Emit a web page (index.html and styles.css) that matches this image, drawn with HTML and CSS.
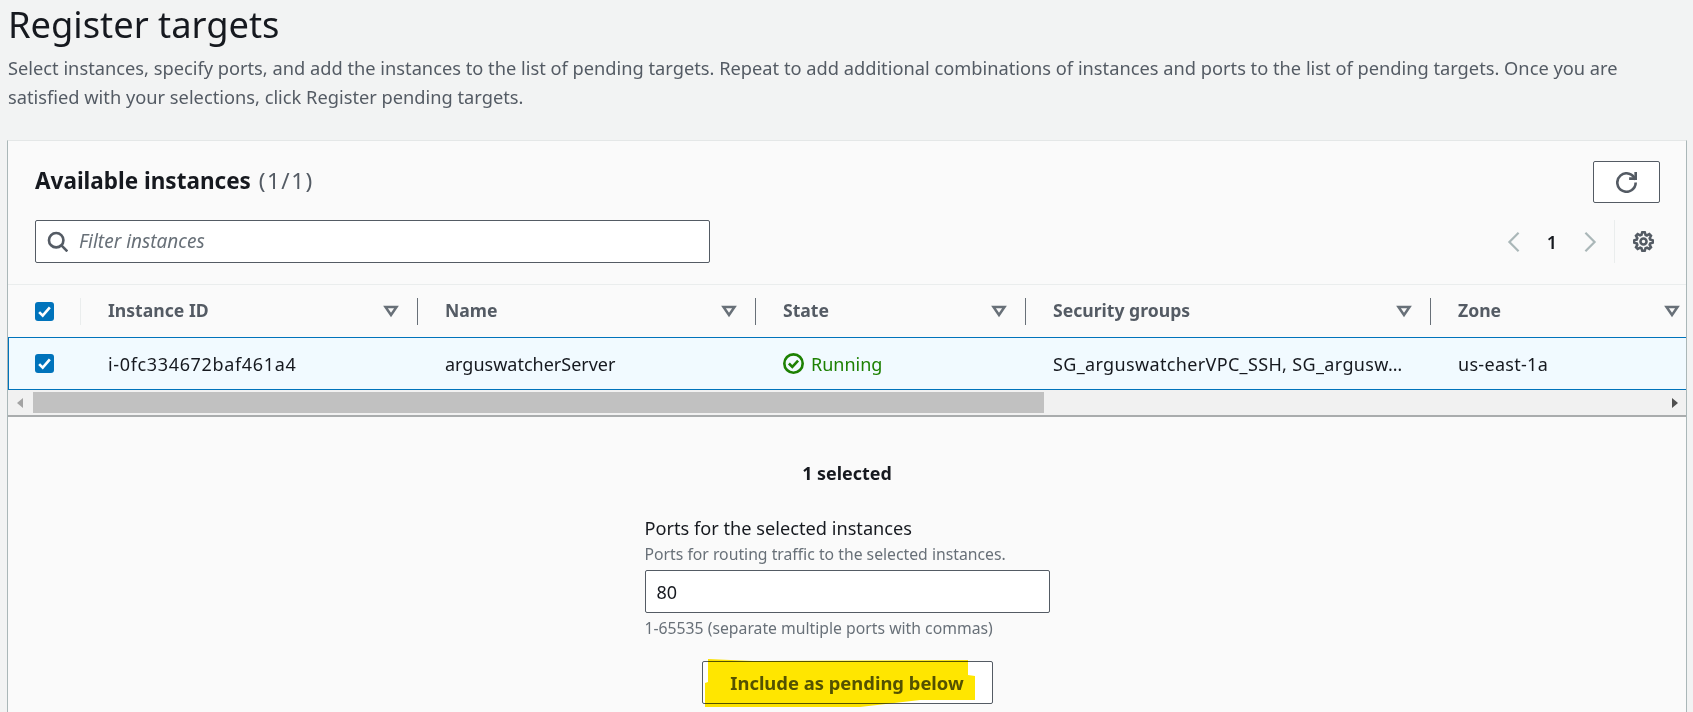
FILE: index.html
```html
<!DOCTYPE html>
<html lang="en">
<head>
<meta charset="UTF-8">
<title>Register targets</title>
<link rel="stylesheet" href="styles.css">
</head>
<body>
<div class="page-head">
    <h1>Register targets</h1>
    <p>Select instances, specify ports, and add the instances to the list of pending targets. Repeat to add additional combinations of instances and ports to the list of pending targets. Once you are satisfied with your selections, click Register pending targets.</p>
</div>

<div class="panel">
    <div class="panel-top">
        <div class="title-row">
            <h2>Available instances <span class="count">(1/1)</span></h2>
            <button class="refresh-btn" aria-label="Refresh">
                <svg class="icon" viewBox="0 0 16 16"><path d="M10 5h5V0"/><path d="M15 8a7 7 0 1 1-.3-2"/></svg>
            </button>
        </div>
        <div class="filter-row">
            <div class="filter-box">
                <svg class="icon search-icon" viewBox="0 0 16 16"><circle cx="7" cy="7" r="5.5"/><path d="M11 11l4.5 4.5"/></svg>
                <span class="placeholder">Filter instances</span>
            </div>
            <div class="pager">
                <svg class="chevron" viewBox="0 0 16 24"><path d="M13 2L3 12l10 10"/></svg>
                <span class="page-num">1</span>
                <svg class="chevron" viewBox="0 0 16 24"><path d="M3 2l10 10L3 22"/></svg>
                <div class="pager-sep"></div>
                <svg class="icon gear" viewBox="-1 -1 18 18"><path d="M13.3 5.2l1.1-2.1L13 1.7l-2.1 1.1c-.3-.2-.7-.3-1.1-.4L9 0H7l-.8 2.3c-.4.1-.7.2-1.1.4L3 1.6 1.6 3l1.1 2.1c-.2.3-.3.7-.4 1.1L0 7v2l2.3.8c.1.4.3.7.4 1.1L1.6 13 3 14.4l2.1-1.1c.3.2.7.3 1.1.4L7 16h2l.8-2.3c.4-.1.7-.3 1.1-.4l2.1 1.1 1.4-1.4-1.1-2.1c.2-.3.3-.7.4-1.1L16 9V7l-2.3-.8c-.1-.4-.3-.7-.4-1z"/><circle cx="8" cy="8" r="2.6"/></svg>
            </div>
        </div>
    </div>

    <div class="grid-row head-row">
        <div class="cell check-cell">
            <span class="checkbox"><svg viewBox="0 0 16 16"><path d="M3.5 8.5l3 3 6-7"/></svg></span>
        </div>
        <div class="cell">Instance ID
            <svg class="filter-icon" viewBox="0 0 16 16"><path d="M2.5 4h11L8 12z"/></svg>
        </div>
        <div class="cell">Name
            <svg class="filter-icon" viewBox="0 0 16 16"><path d="M2.5 4h11L8 12z"/></svg>
        </div>
        <div class="cell">State
            <svg class="filter-icon" viewBox="0 0 16 16"><path d="M2.5 4h11L8 12z"/></svg>
        </div>
        <div class="cell">Security groups
            <svg class="filter-icon" viewBox="0 0 16 16"><path d="M2.5 4h11L8 12z"/></svg>
        </div>
        <div class="cell">Zone
            <svg class="filter-icon" viewBox="0 0 16 16"><path d="M2.5 4h11L8 12z"/></svg>
        </div>
    </div>
    <div class="grid-row body-row">
        <div class="cell check-cell">
            <span class="checkbox"><svg viewBox="0 0 16 16"><path d="M3.5 8.5l3 3 6-7"/></svg></span>
        </div>
        <div class="cell instance-id">i-0fc334672baf461a4</div>
        <div class="cell">arguswatcherServer</div>
        <div class="cell state-running">
            <svg class="status-icon" viewBox="0 0 16 16"><circle cx="8" cy="8" r="7"/><path d="M4.5 8l2.6 2.6 4.4-4.8"/></svg>
            Running
        </div>
        <div class="cell groups">SG_arguswatcherVPC_SSH, SG_argusw…</div>
        <div class="cell zone">us-east-1a</div>
    </div>

    <div class="scrollbar">
        <span class="arrow-left"></span>
        <div class="thumb"></div>
        <span class="arrow-right"></span>
    </div>

    <div class="selection">
        <div class="selected-count">1 selected</div>
        <div class="field">
            <label>Ports for the selected instances</label>
            <div class="field-desc">Ports for routing traffic to the selected instances.</div>
            <div class="text-input">80</div>
            <div class="field-hint">1-65535 (separate multiple ports with commas)</div>
        </div>
        <div class="include-wrap">
            <button class="include-btn">Include as pending below</button>
            <svg class="marker" viewBox="0 0 291 48"><path d="M6 -2 L51 0 L266 -1 L266 14 L273 15 L273 39 L218 39 L158 46 L3 46 L3 22 L6 21z"/></svg>
        </div>
    </div>
</div>
</body>
</html>
```

FILE: styles.css
```css
body {
    margin: 0;
    height: 712px;
    overflow: hidden;
    background-color: #f2f3f3;
    color: #16191f;
    font-family: "Noto Sans", Arial, sans-serif;
    font-size: 18px;
}

.page-head {
    padding: 1px 8px 0;
    height: 140px;
    box-sizing: border-box;
}
h1 {
    margin: 0;
    font-size: 36.3px;
    line-height: 46px;
    font-weight: 400;
}
.page-head p {
    margin: 6px 0 0;
    max-width: 1640px;
    font-size: 18.25px;
    line-height: 29px;
    color: #545b64;
}

.panel {
    margin-left: 7px;
    width: 1680px;
    box-sizing: border-box;
    height: 572px;
    background-color: #fafafa;
    border-top: 1px solid #e4e7e7;
    border-left: 1px solid #aab7b8;
    border-right: 1px solid #aab7b8;
}

.panel-top {
    padding: 20px 26px 0 27px;
    height: 144px;
    box-sizing: border-box;
    border-bottom: 1px solid #eaeded;
}
.title-row {
    display: flex;
    justify-content: space-between;
    align-items: flex-start;
    height: 59px;
}
h2 {
    margin: 6px 0 0;
    font-size: 22.5px;
    line-height: 28px;
    font-weight: 700;
}
.count {
    margin-left: 2px;
    font-weight: 400;
    color: #545b64;
    letter-spacing: 1.5px;
}
.icon {
    fill: none;
    stroke: #545b64;
    stroke-width: 2;
    width: 21px;
    height: 21px;
}
.refresh-btn {
    width: 67px;
    height: 42px;
    padding: 0;
    display: flex;
    align-items: center;
    justify-content: center;
    background-color: #ffffff;
    border: 1px solid #545b64;
    border-radius: 2px;
}
.filter-row {
    display: flex;
    justify-content: space-between;
    align-items: center;
    height: 43px;
}
.filter-box {
    width: 675px;
    height: 43px;
    box-sizing: border-box;
    display: flex;
    align-items: center;
    gap: 11px;
    padding: 0 0 2px 11px;
    background-color: #ffffff;
    border: 1px solid #545b64;
    border-radius: 2px;
}
.search-icon {
    margin-top: 2px;
}
.placeholder {
    font-style: italic;
    font-size: 19px;
    color: #687078;
}
.pager {
    display: flex;
    align-items: center;
    height: 43px;
    margin-right: 6px;
}
.chevron {
    width: 16px;
    height: 22px;
    fill: none;
    stroke: #aab7b8;
    stroke-width: 2.4;
}
.page-num {
    width: 60px;
    text-align: center;
    font-weight: 600;
}
.pager-sep {
    width: 1px;
    height: 43px;
    margin: 0 18px 0 16px;
    background-color: #eaeded;
}
.gear {
    stroke-width: 2.2;
}

.grid-row {
    display: grid;
    grid-template-columns: 72px 337px 338px 270px 405px 1fr;
}
.cell {
    display: flex;
    align-items: center;
    position: relative;
    padding: 0 12px 0 28px;
    min-width: 0;
    white-space: nowrap;
}
.check-cell {
    padding-left: 27px;
}
.checkbox {
    width: 19px;
    height: 19px;
    display: flex;
    background-color: #0073bb;
    border-radius: 3px;
}
.checkbox path {
    fill: none;
    stroke: #ffffff;
    stroke-width: 2.2;
}

.head-row {
    height: 52px;
    font-size: 17.6px;
    font-weight: 700;
    color: #545b64;
}
.head-row .cell {
    padding-bottom: 2px;
}
.head-row .check-cell {
    padding-bottom: 0;
}
.head-row .cell::after {
    content: "";
    position: absolute;
    right: -1px;
    top: 13px;
    height: 27px;
    width: 1px;
    background-color: #687078;
}
.head-row .check-cell::after {
    background-color: #eaeded;
}
.head-row .cell:last-child::after {
    display: none;
}
.filter-icon {
    position: absolute;
    right: 18px;
    top: 18px;
    width: 16px;
    height: 16px;
    fill: none;
    stroke: #687078;
    stroke-width: 2.5;
}
.head-row .cell:last-child .filter-icon {
    right: 6px;
}

.body-row {
    height: 53px;
    background-color: #f1faff;
    box-shadow: inset 1px 0 0 #0073bb, inset 0 1px 0 #0073bb, inset 0 -1px 0 #0073bb;
}
.instance-id {
    letter-spacing: 0.65px;
}
.groups {
    letter-spacing: 0.35px;
}
.zone {
    letter-spacing: 0.3px;
}
.state-running {
    color: #1d8102;
    gap: 7px;
}
.status-icon {
    width: 21px;
    height: 21px;
    fill: none;
    stroke: #1d8102;
    stroke-width: 2;
}

.scrollbar {
    height: 27px;
    box-sizing: border-box;
    display: flex;
    align-items: center;
    background-color: #f1f1f1;
    border-bottom: 2px solid #a9acad;
}
.arrow-left {
    width: 0;
    height: 0;
    margin: 0 10px 0 9px;
    border-top: 5px solid transparent;
    border-bottom: 5px solid transparent;
    border-right: 6px solid #a3a3a3;
}
.thumb {
    width: 1011px;
    height: 21px;
    background-color: #c1c1c1;
}
.arrow-right {
    width: 0;
    height: 0;
    margin-left: auto;
    margin-right: 8px;
    border-top: 5px solid transparent;
    border-bottom: 5px solid transparent;
    border-left: 6px solid #505050;
}

.selection {
    display: flex;
    flex-direction: column;
    align-items: center;
}
.selected-count {
    margin-top: 45px;
    font-size: 17.9px;
    line-height: 22px;
    font-weight: 700;
}
.field {
    width: 405px;
    margin-top: 31px;
}
.field label {
    display: block;
    font-size: 18.2px;
    line-height: 26px;
}
.field-desc, .field-hint {
    font-size: 15.75px;
    line-height: 20px;
    color: #687078;
}
.field-desc {
    margin-top: 3px;
}
.text-input {
    height: 43px;
    box-sizing: border-box;
    margin: 6px 0 5px;
    padding-left: 11px;
    display: flex;
    align-items: center;
    background-color: #ffffff;
    border: 1px solid #545b64;
    border-radius: 2px;
}
.include-wrap {
    position: relative;
    margin-top: 23px;
}
.include-btn {
    display: block;
    width: 291px;
    height: 43px;
    padding: 0;
    background-color: #ffffff;
    border: 1px solid #545b64;
    border-radius: 2px;
    color: #545b64;
    font-family: inherit;
    font-size: 18.4px;
    font-weight: 700;
}
.marker {
    position: absolute;
    left: 0;
    top: 0;
    width: 291px;
    height: 48px;
    overflow: visible;
    fill: #ffe600;
    mix-blend-mode: multiply;
}
```
